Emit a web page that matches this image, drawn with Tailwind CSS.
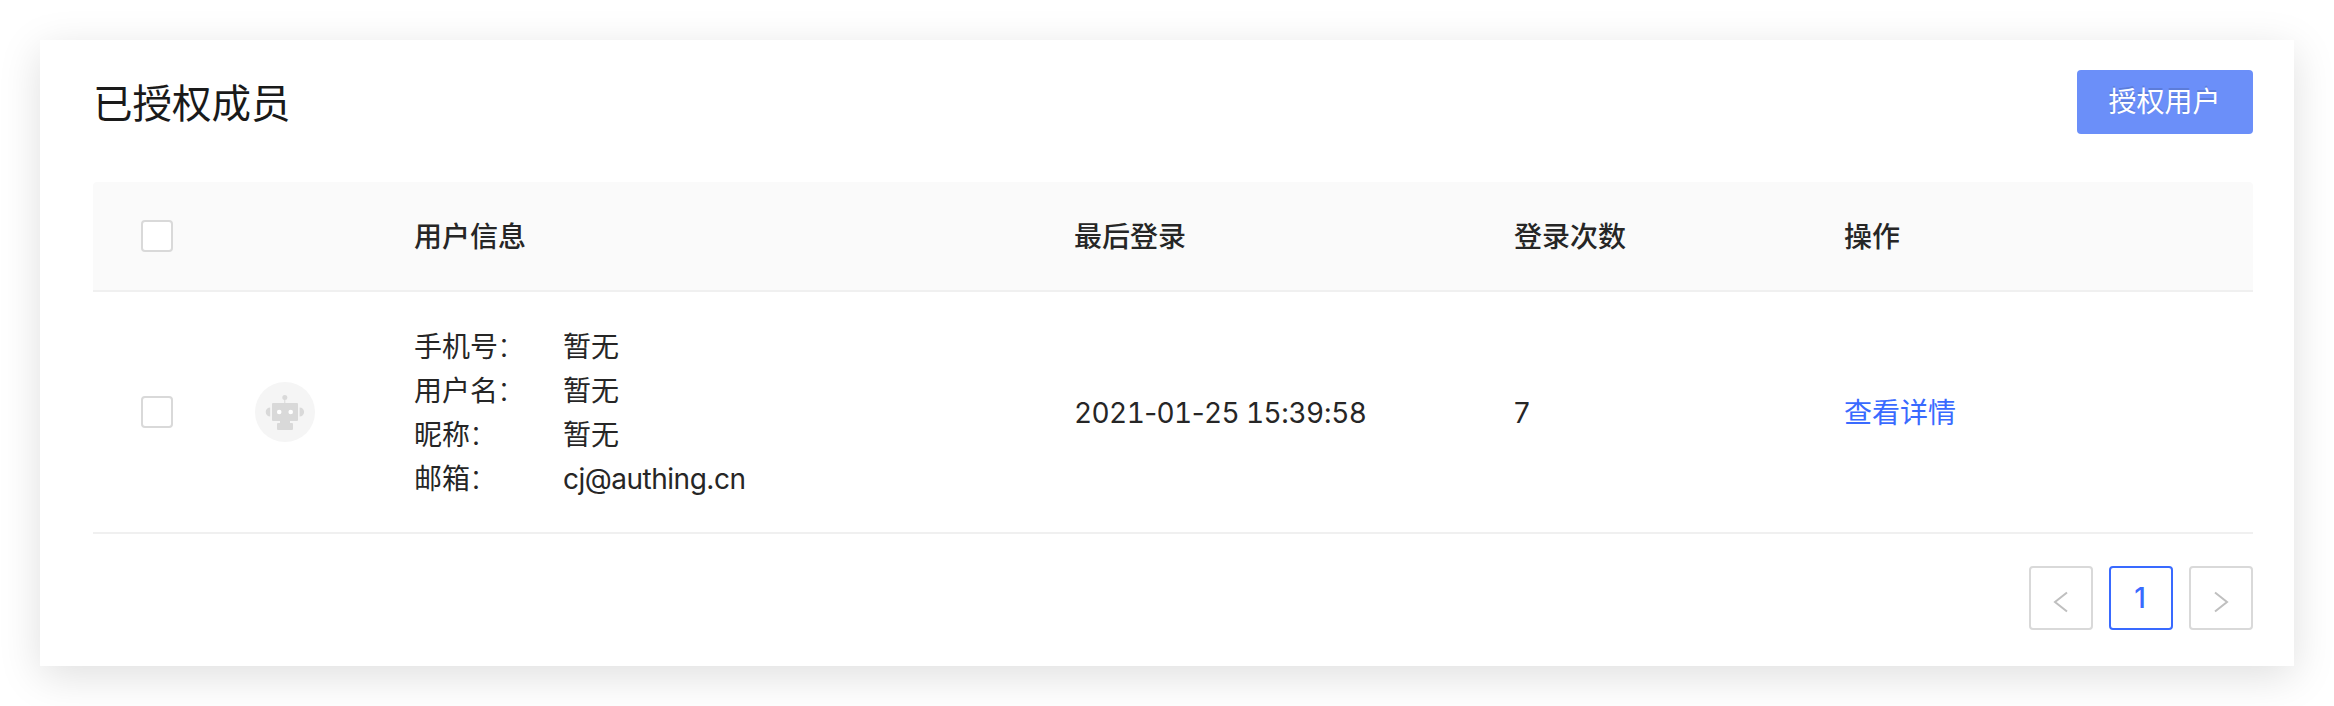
<!DOCTYPE html>
<html lang="zh-CN">
<head>
<meta charset="utf-8">
<title>已授权成员</title>
<script src="https://cdn.jsdelivr.net/npm/@tailwindcss/browser@4"></script>
</head>
<body class="h-[706px] overflow-hidden bg-white p-10 font-['Inter','Noto_Sans_CJK_SC',sans-serif] text-[28px] leading-[44px] text-[#262626]">
<main class="h-[626px] w-[2254px] bg-white pt-[30px] pr-[41px] pl-[53px] shadow-[0_10px_40px_rgba(0,0,0,0.13)]">
  <header class="flex h-16 items-center justify-between">
    <h1 class="pt-[3px] text-[39.5px] leading-[64px] text-[#1a1a1a]">已授权成员</h1>
    <button class="h-16 w-44 rounded-[4px] bg-[#6b8ff9] pr-px text-white [text-shadow:0_-2px_0_rgba(0,0,0,0.12)]">授权用户</button>
  </header>
  <section class="mt-12">
    <div class="grid h-[110px] grid-cols-[162px_159px_660px_440px_330px_1fr] items-center rounded-t-[4px] border-b-2 border-[#f0f0f0] bg-[#fafafa] font-medium">
      <div class="pl-12"><span class="block size-8 rounded-[4px] border-2 border-[#d9d9d9] bg-white"></span></div>
      <div></div>
      <div class="pt-0.5">用户信息</div>
      <div class="pt-0.5">最后登录</div>
      <div class="pt-0.5">登录次数</div>
      <div class="pt-0.5">操作</div>
    </div>
    <div class="grid h-[242px] grid-cols-[162px_159px_660px_440px_330px_1fr] items-center border-b-2 border-[#f0f0f0]">
      <div class="pl-12"><span class="block size-8 rounded-[4px] border-2 border-[#d9d9d9] bg-white"></span></div>
      <div>
        <svg class="size-[60px]" viewBox="0 0 60 60">
          <circle cx="30" cy="30" r="30" fill="#f5f5f5"/>
          <g fill="#d9d9d9">
            <circle cx="29.8" cy="15.4" r="2.5"/>
            <path d="M29.3 17h1v5h-1z"/>
            <rect x="17" y="21" width="26" height="18" rx="1"/>
            <path d="M15.200 25.500v9a4.500 4.500 0 0 1 0-9zM44.600 25.500v9a4.500 4.500 0 0 0 0-9z"/>
            <path d="M25 39h10v2h2a1 1 0 0 1 1 1v5a1 1 0 0 1-1 1H23a1 1 0 0 1-1-1v-5a1 1 0 0 1 1-1h2z"/>
          </g>
          <circle cx="24.200" cy="30" r="2.300" fill="#fff"/>
          <circle cx="35.700" cy="30" r="2.300" fill="#fff"/>
        </svg>
      </div>
      <dl class="grid grid-cols-[149px_1fr] pt-px">
        <dt>手机号<span class="-ml-px font-light">：</span></dt><dd>暂无</dd>
        <dt>用户名<span class="-ml-px font-light">：</span></dt><dd>暂无</dd>
        <dt>昵称<span class="-ml-px font-light">：</span></dt><dd>暂无</dd>
        <dt>邮箱<span class="-ml-px font-light">：</span></dt><dd class="tracking-[-0.5px]">cj@authing.cn</dd>
      </dl>
      <div class="pt-px tracking-[-0.6px] tabular-nums">2021<span class="proportional-nums">-</span>01<span class="proportional-nums">-</span>25 15<span class="proportional-nums">:</span>39<span class="proportional-nums">:</span>58</div>
      <div class="pt-px">7</div>
      <div class="pt-0.5"><a class="text-[#396aff]">查看详情</a></div>
    </div>
  </section>
  <nav class="mt-8 flex justify-end gap-4">
    <button class="flex size-16 items-center justify-center rounded-[4px] border-2 border-[#d9d9d9]">
      <svg class="mt-2 h-6 w-6" viewBox="0 0 24 24" fill="none" stroke="#bfbfbf" stroke-width="2"><path d="M18 2.500L6 12l12 9.500"/></svg>
    </button>
    <button class="flex size-16 items-center justify-center rounded-[4px] border-2 border-[#396aff] pr-0.5 font-medium text-[#396aff]">1</button>
    <button class="flex size-16 items-center justify-center rounded-[4px] border-2 border-[#d9d9d9]">
      <svg class="mt-2 h-6 w-6" viewBox="0 0 24 24" fill="none" stroke="#bfbfbf" stroke-width="2"><path d="M6 2.500L18 12 6 21.500"/></svg>
    </button>
  </nav>
</main>
</body>
</html>
